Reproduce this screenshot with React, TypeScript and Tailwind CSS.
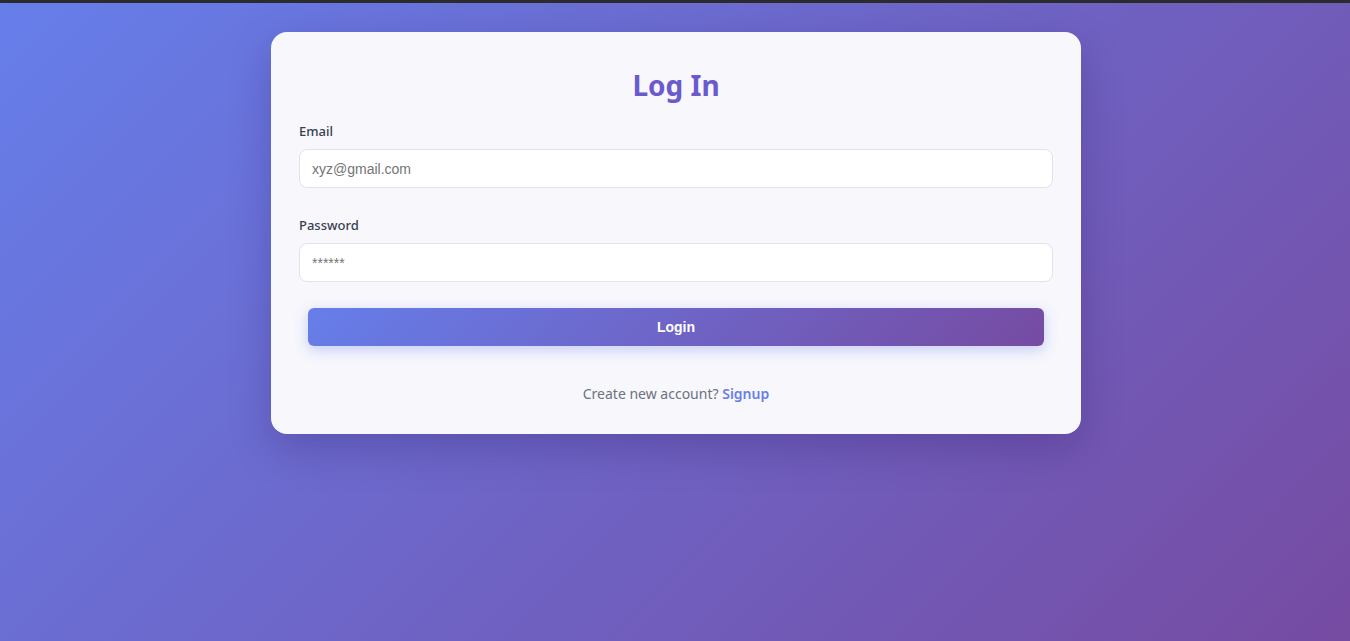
export default function App() {
  return (
    <div className="min-h-screen border-t-[3px] border-[#2b2b2e] bg-[linear-gradient(135deg,#667eea_0%,#764ba2_100%)] pt-[29px] pl-[2px] font-['Noto_Sans',sans-serif]">
      <div className="mx-auto w-[810px] rounded-2xl bg-[#f7f7fc] px-7 pt-[35px] pb-[30px] shadow-[0_15px_40px_rgba(40,20,90,0.25)]">
        <h2 className="text-center text-[28px] leading-[36px] font-bold text-[#6a5acd]">Log In</h2>

        <form className="mt-[18px]" onSubmit={(e) => e.preventDefault()}>
          <label className="block text-[13px] leading-5 font-medium text-[#374151]">Email</label>
          <input
            type="email"
            placeholder="xyz@gmail.com"
            className="mt-2 block h-[39px] w-full rounded-lg border border-[#e3e3ec] bg-white px-3 font-['Liberation_Sans',Arial,sans-serif] text-[14px] text-[#333] placeholder:text-[#757575] outline-none"
          />

          <label className="mt-[27px] block text-[13px] leading-5 font-medium text-[#374151]">Password</label>
          <input
            type="password"
            placeholder="******"
            className="mt-2 block h-[39px] w-full rounded-lg border border-[#e3e3ec] bg-white px-3 font-['Liberation_Sans',Arial,sans-serif] text-[14px] text-[#333] placeholder:text-[#757575] outline-none"
          />

          <div className="px-[9px] pt-[26px]">
            <button
              type="submit"
              className="h-[38px] w-full rounded-md bg-[linear-gradient(135deg,#667eea_0%,#764ba2_100%)] font-['Liberation_Sans',Arial,sans-serif] text-[14px] font-bold text-white shadow-[0_4px_14px_rgba(102,126,234,0.35)]"
            >
              Login
            </button>
          </div>
        </form>

        <p className="mt-[38px] text-center text-[14px] leading-5 text-[#6b7280]">
          Create new account?{' '}
          <a href="#" className="font-semibold text-[#667eea]">
            Signup
          </a>
        </p>
      </div>
    </div>
  );
}
